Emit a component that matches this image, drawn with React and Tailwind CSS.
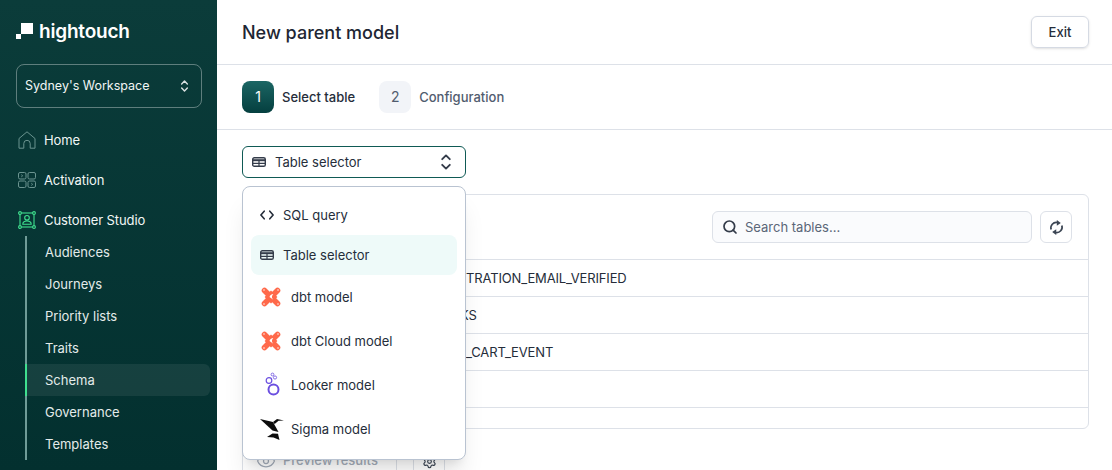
import React from 'react';
import { Search, Eye, Settings } from 'lucide-react';

const navSub = ['Audiences', 'Journeys', 'Priority lists', 'Traits', 'Schema', 'Governance', 'Templates'];

/* rows run underneath the open dropdown, so only the tail of each name shows */
const rows = [
  { name: 'TRATION_EMAIL_VERIFIED', inset: 'pl-[223px]' },
  { name: 'KS', inset: 'pl-[217px]' },
  { name: '_CART_EVENT', inset: 'pl-[223px]' },
  { name: '', inset: '' },
];

const Updown = ({ className }) => (
  <svg viewBox="0 0 12 18" className={className} fill="none" stroke="currentColor" strokeWidth="1.9" strokeLinecap="round" strokeLinejoin="round">
    <path d="M2.2 6.2 6 2.4l3.8 3.8" />
    <path d="M2.2 11.8 6 15.6l3.8-3.8" />
  </svg>
);

const TableIcon = ({ className }) => (
  <svg viewBox="0 0 14 10" className={className} fill="none">
    <rect x="0.7" y="0.7" width="12.6" height="8.6" rx="1.6" stroke="currentColor" strokeWidth="1.4" />
    <path d="M1 3.2h12" stroke="currentColor" strokeWidth="2" />
    <path d="M1 6.3h12M7 3.5v5.5" stroke="currentColor" strokeWidth="1.2" />
  </svg>
);

const CodeIcon = ({ className }) => (
  <svg viewBox="0 0 14 10" className={className} fill="none" stroke="currentColor" strokeWidth="1.6" strokeLinecap="round" strokeLinejoin="round">
    <path d="M4.2 1.2.9 5l3.3 3.8" />
    <path d="M9.8 1.2 13.1 5 9.8 8.8" />
  </svg>
);

const HomeIcon = ({ className }) => (
  <svg viewBox="0 0 18 18" className={className} fill="none" stroke="currentColor" strokeWidth="1" strokeLinejoin="round">
    <path d="M1 7.5 9 .8l8 6.7v9.7h-4.8v-4.7a3.2 3.2 0 0 0-6.4 0v4.7H1z" />
  </svg>
);

const ActivationIcon = ({ className }) => (
  <svg viewBox="0 0 18 18" className={className} fill="none" stroke="currentColor" strokeWidth="1">
    <rect x="0.5" y="1.5" width="7.5" height="6.5" rx="1.5" />
    <rect x="10" y="1.5" width="7.5" height="6.5" rx="1.5" />
    <rect x="0.5" y="10" width="7.5" height="6.5" rx="1.5" />
    <rect x="10" y="10" width="7.5" height="6.5" rx="1.5" />
    <path d="m3.3 3.7 1.3 1.1-1.3 1.1M13.3 12.2l1.3 1.1-1.3 1.1" />
  </svg>
);

const StudioIcon = ({ className }) => (
  <svg viewBox="0 0 18 18" className={className} fill="none" stroke="currentColor" strokeWidth="1.1">
    <rect x="2" y="2" width="14" height="14" />
    <circle cx="2" cy="2" r="1.4" fill="#0a3836" />
    <circle cx="16" cy="2" r="1.4" fill="#0a3836" />
    <circle cx="2" cy="16" r="1.4" fill="#0a3836" />
    <circle cx="16" cy="16" r="1.4" fill="#0a3836" />
    <circle cx="9" cy="6.8" r="2.3" />
    <path d="M4.8 13.2c0-2.2 1.8-3.2 4.2-3.2s4.2 1 4.2 3.2z" />
  </svg>
);

const SyncIcon = ({ className }) => (
  <svg viewBox="0 0 16 16" className={className} fill="none" stroke="currentColor" strokeWidth="1.8">
    <path d="M2.3 10.2A5.8 5.8 0 0 1 9 2.7" />
    <path d="M13.7 5.8A5.8 5.8 0 0 1 7 13.3" />
    <path d="M8.3 0 12.6 3.2 8.3 6.2z" fill="currentColor" stroke="none" />
    <path d="M7.7 16 3.4 12.8 7.7 9.8z" fill="currentColor" stroke="none" />
  </svg>
);

const DbtIcon = () => (
  <svg viewBox="0 0 20 20" className="w-5 h-5 shrink-0">
    <path d="M3.5 3.5 16.5 16.5M16.5 3.5 3.5 16.5" stroke="#ff694a" strokeWidth="5.6" strokeLinecap="round" />
    <path d="M10 3.6 16.4 10 10 16.4 3.6 10z" fill="#ff694a" />
    <circle cx="3" cy="3" r="1" fill="#ffb9aa" />
    <circle cx="17" cy="3" r="1" fill="#ffb9aa" />
    <circle cx="3" cy="17" r="1" fill="#ffb9aa" />
    <circle cx="17" cy="17" r="1" fill="#ffb9aa" />
    <path d="M12.3 7c-1.9.2-3.4 1.3-3.8 3l3.8 2.8c-1.2-1.3-1.7-2.5-1.2-3.7.2-.7.6-1.4 1.2-2.1z" fill="#fff" />
  </svg>
);

const LookerIcon = () => (
  <svg viewBox="0 0 20 26" className="w-5 h-[26px] shrink-0" fill="none" stroke="#6b4fe0">
    <circle cx="11.5" cy="2.5" r="1.4" strokeWidth="0.8" />
    <circle cx="14" cy="5.5" r="1.6" strokeWidth="0.8" />
    <circle cx="8" cy="8.5" r="2.8" strokeWidth="1.2" />
    <circle cx="12.5" cy="17.5" r="5" strokeWidth="2" />
  </svg>
);

const SigmaIcon = () => (
  <svg viewBox="0 0 24 22" className="w-6 h-[22px] shrink-0" fill="#0d0d0d">
    <path d="M0 1 13 4 18.5 14 12.5 12.5z" />
    <path d="M13 4 17 1 24 2.5 18.5 2.8 14.7 6z" />
    <path d="M7 19 12.5 15.5 18 15.8 19.5 22 13.5 19.5z" />
  </svg>
);

const NavRow = ({ icon, label }) => (
  <div className="h-10 flex items-center pl-0.5 gap-2 text-[13px] tracking-[-0.1px] text-[#f1f6f5]">
    {icon}
    <span className="pt-px">{label}</span>
  </div>
);

const MenuItem = ({ icon, label, active, gap = 'gap-[9px]', pad = 'pl-[9px]', tall }) => (
  <div className={`flex items-center rounded-lg text-[13px] text-[#252d3a] ${tall ? 'h-11' : 'h-10'} ${gap} ${pad} ${active ? 'bg-[#eefaf9]' : ''}`}>
    {icon}
    <span className="pt-0.5">{label}</span>
  </div>
);

export default function App() {
  return (
    <div className="flex w-[1112px] h-[470px] overflow-hidden bg-white font-['Inter',sans-serif] antialiased">
      {/* Sidebar */}
      <aside className="w-[217px] shrink-0 h-full bg-gradient-to-b from-[#0b3c3a] to-[#03302f] px-4 pt-5">
        <div className="flex items-center gap-[6px] h-[22px]">
          <svg viewBox="0 0 17 16" className="w-[17px] h-4 shrink-0" fill="#fff">
            <path d="M5 0h12v11H5z" />
            <path d="M0 11h5v5H0z" />
          </svg>
          <span className="text-[19px] leading-none font-semibold text-white tracking-[-0.2px]">hightouch</span>
        </div>
        <div className="mt-[22px] h-11 w-[186px] flex items-center justify-between pl-[8px] pr-3 rounded-lg border border-white/35">
          <span className="text-[12.5px] text-[#f1f6f5]">Sydney's Workspace</span>
          <Updown className="w-[9px] h-[14px] text-white/85" />
        </div>
        <div className="mt-3">
          <NavRow icon={<HomeIcon className="w-[18px] h-[18px] text-[#6b9490]" />} label="Home" />
          <NavRow icon={<ActivationIcon className="w-[18px] h-[18px] text-[#6b9490]" />} label="Activation" />
          <NavRow icon={<StudioIcon className="w-[18px] h-[18px] text-[#3fe08f]" />} label="Customer Studio" />
        </div>
        <div className="ml-[9px] -mt-1 border-l-2 border-[#6f9b97]">
          {navSub.map((item) => (
            <div
              key={item}
              className={`h-8 flex items-center w-[185px] -ml-0.5 pl-[18px] pt-0.5 border-l-2 rounded-r-md text-[13px] text-[#e3ebea] ${item === 'Schema' ? 'border-[#3fe08f] bg-white/[0.07]' : 'border-transparent'}`}
            >
              {item}
            </div>
          ))}
        </div>
      </aside>

      {/* Main */}
      <main className="relative flex-1 min-w-0">
        <header className="h-[65px] flex items-center justify-between pl-[25px] pr-[23px] border-b border-[#dde1e8]">
          <h1 className="text-[18px] font-medium text-[#1e2633]">New parent model</h1>
          <button className="w-[58px] h-8 pt-px rounded-md border border-[#d5dae3] text-[13px] font-medium text-[#252d3a] shadow-sm">Exit</button>
        </header>

        <div className="h-[65px] flex items-center pl-[25px] border-b border-[#dde1e8] text-[13px] font-medium">
          <div className="w-8 h-8 rounded-lg bg-gradient-to-b from-[#1b6664] to-[#053f3f] flex items-center justify-center text-white font-normal text-sm">1</div>
          <span className="ml-2 pt-0.5 text-[#252d3a]">Select table</span>
          <div className="ml-6 w-8 h-8 rounded-lg bg-[#f2f4f8] flex items-center justify-center text-[#515c6e] font-normal text-sm">2</div>
          <span className="ml-2 pt-0.5 text-[#515c6e]">Configuration</span>
        </div>

        <div className="pl-[25px] pr-[23px] pt-4">
          <div className="w-[224px] h-8 flex items-center justify-between pl-[9px] pr-[13px] rounded-md border border-[#0f5a55] text-[13px] text-[#252d3a]">
            <div className="flex items-center gap-[9px]">
              <TableIcon className="w-[14px] h-[10px] text-[#343c4a]" />
              <span className="pt-0.5">Table selector</span>
            </div>
            <Updown className="w-3 h-[18px] text-[#343c4a]" />
          </div>

          <section className="mt-4 h-[235px] rounded-md border border-[#dde1e8]">
            <div className="h-[65px] flex items-center justify-end gap-2 pr-4 border-b border-[#dde1e8]">
              <div className="w-[320px] h-8 flex items-center gap-[7px] pl-[9px] rounded-md border border-[#dde1e8] bg-[#fafbfd] text-[13px] text-[#5b6678]">
                <Search size={16} strokeWidth={2.6} className="text-[#343c4a]" />
                <span className="pt-0.5">Search tables...</span>
              </div>
              <div className="w-8 h-8 flex items-center justify-center rounded-md border border-[#dde1e8]">
                <SyncIcon className="w-[15px] h-[15px] text-[#3b4553]" />
              </div>
            </div>
            {rows.map((row, i) => (
              <div key={i} className={`h-[37px] flex items-center border-b border-[#dde1e8] text-[13px] tracking-[-0.15px] text-[#252d3a] ${row.inset}`}>
                <span className="pt-0.5">{row.name}</span>
              </div>
            ))}
          </section>

          <div className="mt-4 flex gap-4">
            <div className="w-[155px] h-8 flex items-center gap-[7px] pl-[13px] rounded-md border border-[#dde1e8] text-[13px] font-medium text-[#a3acb9]">
              <Eye size={20} strokeWidth={1.5} />
              <span>Preview results</span>
            </div>
            <div className="w-8 h-8 flex items-center justify-center rounded-md border border-[#dde1e8] text-[#3b4553]">
              <Settings size={15} strokeWidth={1.8} />
            </div>
          </div>
        </div>

        {/* Open dropdown sits over the table */}
        <div className="absolute left-[25px] top-[186px] w-[224px] h-[274px] p-2 rounded-lg border border-[#b9c3d1] bg-white shadow-xl">
          <MenuItem label="SQL query" icon={<CodeIcon className="w-[14px] h-[10px] text-[#252d3a]" />} />
          <MenuItem label="Table selector" active icon={<TableIcon className="w-[14px] h-[10px] text-[#343c4a]" />} />
          <MenuItem tall label="dbt model" gap="gap-[10px]" pad="pl-[10px]" icon={<DbtIcon />} />
          <MenuItem tall label="dbt Cloud model" gap="gap-[10px]" pad="pl-[10px]" icon={<DbtIcon />} />
          <MenuItem tall label="Looker model" gap="gap-[10px]" pad="pl-[10px]" icon={<LookerIcon />} />
          <MenuItem tall label="Sigma model" gap="gap-[7px]" pad="pl-[9px]" icon={<SigmaIcon />} />
        </div>
      </main>
    </div>
  );
}
